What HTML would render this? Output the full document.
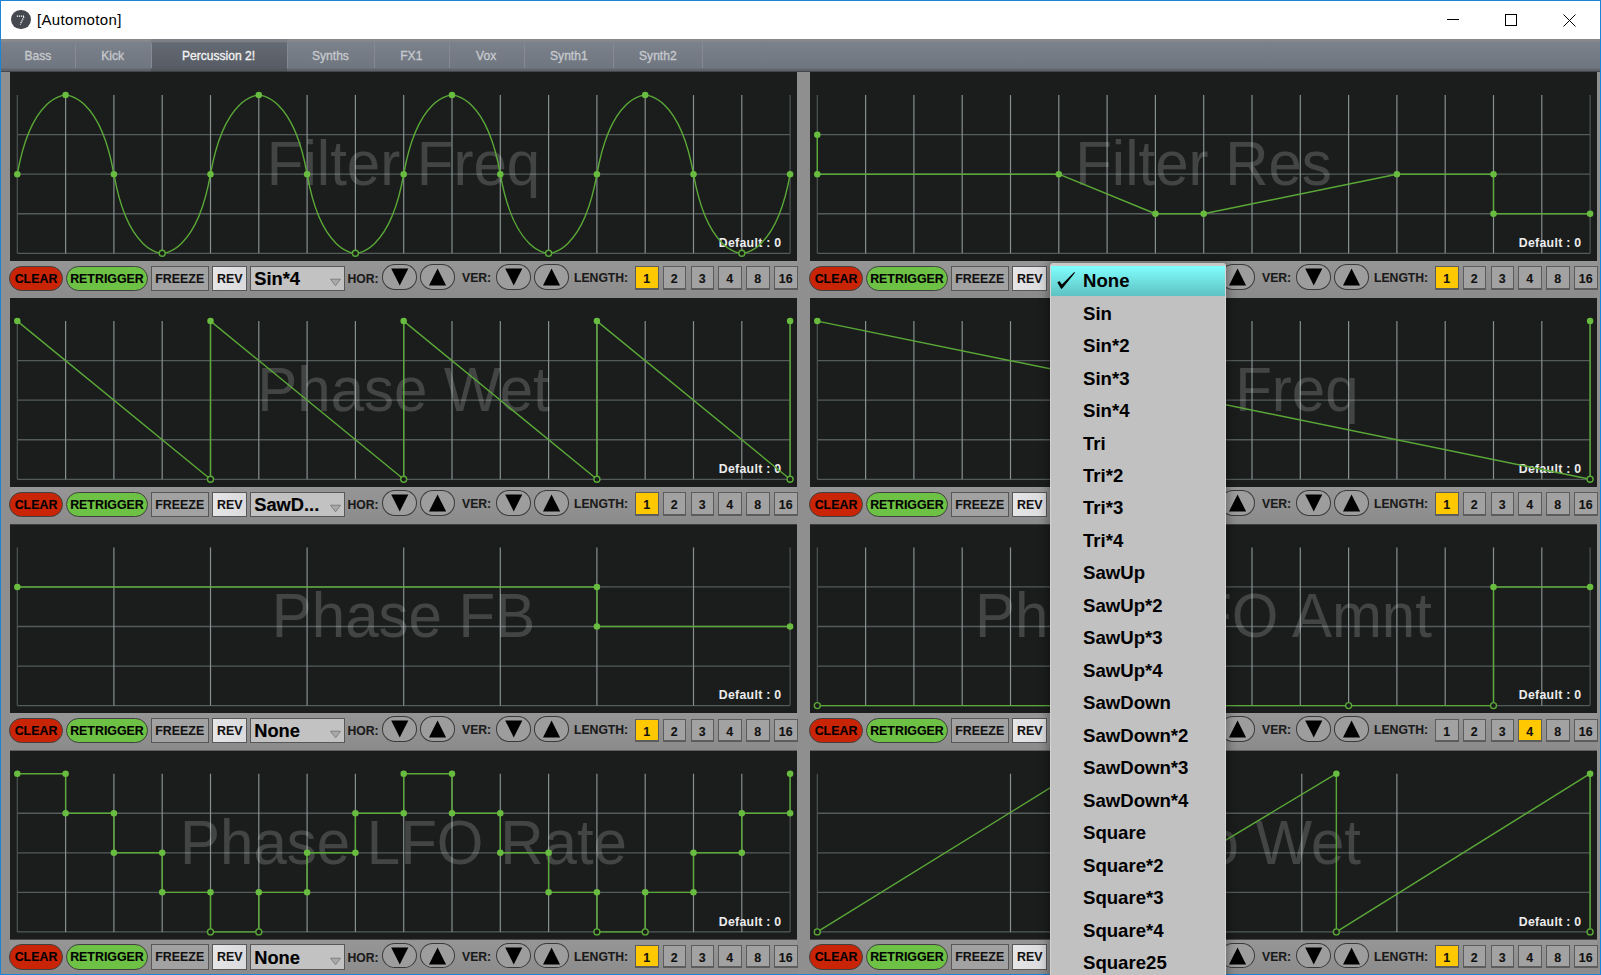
<!DOCTYPE html>
<html><head><meta charset="utf-8"><style>
*{margin:0;padding:0;box-sizing:border-box}
html,body{width:1601px;height:975px;overflow:hidden;background:#1a84d8;font-family:"Liberation Sans",sans-serif}
#win{position:absolute;left:1px;top:1px;width:1599px;height:973px;background:#8f8f8f;overflow:hidden}
#title{position:absolute;left:0;top:0;width:1599px;height:38px;background:#fff}
#icon{position:absolute;left:10px;top:8.5px;width:19.5px;height:19.5px;border-radius:50%;background:#45484e}
#ttl{position:absolute;left:36px;top:10px;font-size:15px;color:#000;letter-spacing:0.35px}
.wc{position:absolute;background:#000}
#tabs{position:absolute;left:0;top:38px;width:1599px;height:33px;background:linear-gradient(#88898c 0px,#86888b 2.5px,#7b818a 3.5px,#6f7680 29px,#60656d 30.5px,#5d6269 32px,#2c2e31 33px)}
.tab{position:absolute;top:0;height:33px;text-align:center;color:#c6c9cd}
.tab span{display:inline-block;font-size:13.4px;line-height:34px;transform:scaleX(0.9);-webkit-text-stroke:0.35px #c6c9cd;white-space:nowrap}
.tab.sel{background:linear-gradient(#7e8185 0px,#7c7f84 2.5px,#646a73 4px,#575c65 29px,#52575e 30.5px,#50555c 32px,#2a2c2f 33px);color:#f2f2f2}
.tab.sel span{-webkit-text-stroke:0.35px #f2f2f2}
.tsep{position:absolute;top:4px;width:1px;height:25px;background:#868b92}
.crow{position:absolute;width:787px;height:37px;background:linear-gradient(#969696,#8b8b8b)}
.pill{position:absolute;height:25.5px;border-radius:13px;border:1.3px solid #404040;font-weight:bold;font-size:12.4px;line-height:25px;text-align:center;color:#000;-webkit-text-stroke:0.1px #000}
.red{background:#ca2407}
.grn{background:#6dc144}
.rb{position:absolute;height:25.5px;border:1.5px solid #575757;font-weight:bold;font-size:12.4px;line-height:24px;text-align:center;color:#111;-webkit-text-stroke:0.1px #111}
.frz{background:#a2a2a2}
.rev{background:linear-gradient(90deg,#e6e6e8,#dadadc)}
.dd{position:absolute;height:25.5px;border:1.5px solid #575757;background:#c2c2c2}
.dd span{position:absolute;left:3px;top:2.5px;font-weight:bold;font-size:18.3px;line-height:20px;color:#000;-webkit-text-stroke:0.15px #000}
.dd svg{position:absolute;left:78px;top:11.5px}
.lbl{position:absolute;height:25px;font-weight:bold;font-size:12.2px;line-height:26px;color:#1a1a1a;-webkit-text-stroke:0.1px #1a1a1a}
.ell{position:absolute;width:34.5px;height:25.5px;border-radius:13px/12.75px;border:1.5px solid #3a3a3a;background:#9d9d9d}
.ell svg{position:absolute;left:-1px;top:-1px}
.lb{position:absolute;width:23.5px;height:23.5px;border:1.6px solid #5c5c5c;border-bottom-width:2px;background:#a2a2a2;font-weight:bold;font-size:12.4px;line-height:24.5px;text-align:center;color:#111;-webkit-text-stroke:0.1px #111}
.lb.on{background:#ffc800}
#menu{position:absolute;left:1050px;top:262.5px;width:176px;height:720px;background:#c1c1c1;border-radius:3px 3px 0 0;box-shadow:0 0 10px 2px rgba(0,0,0,0.35);border-left:1px solid #d6d2d2;border-right:1px solid #d6d6d6;border-top:3.1px solid #c9c9c9}
#hl{position:absolute;left:0;top:0;width:174px;height:30.3px;background:linear-gradient(#80fefe,#5ec2c2)}
.mi{position:absolute;left:32px;height:32px;font-weight:bold;font-size:18.6px;line-height:32px;color:#000;margin-top:-0.4px}
#chk{position:absolute;left:-1px;top:-3.6px}
</style></head><body>
<div id="win">
<div id="title"><div id="icon"><svg width="19.5" height="19.5"><path d="M5.8,6.2 L13.2,6.2 L9.2,14.5" fill="none" stroke="#fff" stroke-width="1.3" stroke-dasharray="1.2 0.8"/></svg></div><div id="ttl">[Automoton]</div>
<div class="wc" style="left:1445.5px;top:18px;width:12px;height:1px"></div>
<div style="position:absolute;left:1503.5px;top:13px;width:12px;height:12px;border:1px solid #000"></div>
<svg style="position:absolute;left:1562px;top:13px" width="13" height="13"><path d="M0.5,0.5 L12.5,12.5 M12.5,0.5 L0.5,12.5" stroke="#000" stroke-width="1"/></svg>
</div>
<div id="tabs">
<div class="tab" style="left:0px;width:74px"><span>Bass</span></div>
<div class="tab" style="left:74px;width:76px"><span>Kick</span></div>
<div class="tab sel" style="left:150px;width:136px"><span>Percussion 2!</span></div>
<div class="tab" style="left:286px;width:87px"><span>Synths</span></div>
<div class="tab" style="left:373px;width:75px"><span>FX1</span></div>
<div class="tab" style="left:448px;width:75px"><span>Vox</span></div>
<div class="tab" style="left:523px;width:89px"><span>Synth1</span></div>
<div class="tab" style="left:612px;width:89px"><span>Synth2</span></div>
<div class="tsep" style="left:74px"></div>
<div class="tsep" style="left:150px"></div>
<div class="tsep" style="left:286px"></div>
<div class="tsep" style="left:373px"></div>
<div class="tsep" style="left:448px"></div>
<div class="tsep" style="left:523px"></div>
<div class="tsep" style="left:612px"></div>
<div class="tsep" style="left:701px"></div>
</div>
</div>
<svg width="1601" height="975" style="position:absolute;left:0;top:0"><rect x="10" y="72" width="787" height="189" fill="#1b1d1c"/>
<line x1="17.3" y1="253.3" x2="790.1" y2="253.3" stroke="#535c5b" stroke-width="1.3"/>
<line x1="17.3" y1="213.75" x2="790.1" y2="213.75" stroke="#535c5b" stroke-width="1.3"/>
<line x1="17.3" y1="174.20000000000002" x2="790.1" y2="174.20000000000002" stroke="#535c5b" stroke-width="1.3"/>
<line x1="17.3" y1="134.65000000000003" x2="790.1" y2="134.65000000000003" stroke="#535c5b" stroke-width="1.3"/>
<line x1="17.30" y1="95.1" x2="17.30" y2="253.3" stroke="#4e5655" stroke-width="1.2"/>
<line x1="65.60" y1="95.1" x2="65.60" y2="253.3" stroke="#85908f" stroke-width="1.2"/>
<line x1="113.90" y1="95.1" x2="113.90" y2="253.3" stroke="#85908f" stroke-width="1.2"/>
<line x1="162.20" y1="95.1" x2="162.20" y2="253.3" stroke="#85908f" stroke-width="1.2"/>
<line x1="210.50" y1="95.1" x2="210.50" y2="253.3" stroke="#85908f" stroke-width="1.2"/>
<line x1="258.80" y1="95.1" x2="258.80" y2="253.3" stroke="#85908f" stroke-width="1.2"/>
<line x1="307.10" y1="95.1" x2="307.10" y2="253.3" stroke="#85908f" stroke-width="1.2"/>
<line x1="355.40" y1="95.1" x2="355.40" y2="253.3" stroke="#85908f" stroke-width="1.2"/>
<line x1="403.70" y1="95.1" x2="403.70" y2="253.3" stroke="#85908f" stroke-width="1.2"/>
<line x1="452.00" y1="95.1" x2="452.00" y2="253.3" stroke="#85908f" stroke-width="1.2"/>
<line x1="500.30" y1="95.1" x2="500.30" y2="253.3" stroke="#85908f" stroke-width="1.2"/>
<line x1="548.60" y1="95.1" x2="548.60" y2="253.3" stroke="#85908f" stroke-width="1.2"/>
<line x1="596.90" y1="95.1" x2="596.90" y2="253.3" stroke="#85908f" stroke-width="1.2"/>
<line x1="645.20" y1="95.1" x2="645.20" y2="253.3" stroke="#85908f" stroke-width="1.2"/>
<line x1="693.50" y1="95.1" x2="693.50" y2="253.3" stroke="#85908f" stroke-width="1.2"/>
<line x1="741.80" y1="95.1" x2="741.80" y2="253.3" stroke="#85908f" stroke-width="1.2"/>
<line x1="790.10" y1="95.1" x2="790.10" y2="253.3" stroke="#4e5655" stroke-width="1.2"/>
<text transform="translate(403.5,184.9) scale(1,1.035)" x="0" y="0" text-anchor="middle" font-family="Liberation Sans" font-size="60" fill="#ffffff" fill-opacity="0.175">Filter Freq</text>
<text x="781.5" y="247" text-anchor="end" font-family="Liberation Sans" font-weight="bold" font-size="12.3" letter-spacing="0.3" fill="#ececec">Default : 0</text>
<path d="M17.30,174.20 C31.31,95.10 64.63,95.10 65.60,95.10 C66.57,95.10 99.89,95.10 113.90,174.20 C127.91,253.30 161.23,253.30 162.20,253.30 C163.17,253.30 196.49,253.30 210.50,174.20 C224.51,95.10 257.83,95.10 258.80,95.10 C259.77,95.10 293.09,95.10 307.10,174.20 C321.11,253.30 354.43,253.30 355.40,253.30 C356.37,253.30 389.69,253.30 403.70,174.20 C417.71,95.10 451.03,95.10 452.00,95.10 C452.97,95.10 486.29,95.10 500.30,174.20 C514.31,253.30 547.63,253.30 548.60,253.30 C549.57,253.30 582.89,253.30 596.90,174.20 C610.91,95.10 644.23,95.10 645.20,95.10 C646.17,95.10 679.49,95.10 693.50,174.20 C707.51,253.30 740.83,253.30 741.80,253.30 C742.77,253.30 776.09,253.30 790.10,174.20" fill="none" stroke="#5aa937" stroke-width="1.4" stroke-linejoin="round"/>
<circle cx="17.30" cy="174.20" r="3.25" fill="#68bc3f"/>
<circle cx="65.60" cy="95.10" r="3.25" fill="#68bc3f"/>
<circle cx="113.90" cy="174.20" r="3.25" fill="#68bc3f"/>
<circle cx="162.20" cy="253.30" r="3.0" fill="#1b1d1c" stroke="#5aa937" stroke-width="1.4"/>
<circle cx="210.50" cy="174.20" r="3.25" fill="#68bc3f"/>
<circle cx="258.80" cy="95.10" r="3.25" fill="#68bc3f"/>
<circle cx="307.10" cy="174.20" r="3.25" fill="#68bc3f"/>
<circle cx="355.40" cy="253.30" r="3.0" fill="#1b1d1c" stroke="#5aa937" stroke-width="1.4"/>
<circle cx="403.70" cy="174.20" r="3.25" fill="#68bc3f"/>
<circle cx="452.00" cy="95.10" r="3.25" fill="#68bc3f"/>
<circle cx="500.30" cy="174.20" r="3.25" fill="#68bc3f"/>
<circle cx="548.60" cy="253.30" r="3.0" fill="#1b1d1c" stroke="#5aa937" stroke-width="1.4"/>
<circle cx="596.90" cy="174.20" r="3.25" fill="#68bc3f"/>
<circle cx="645.20" cy="95.10" r="3.25" fill="#68bc3f"/>
<circle cx="693.50" cy="174.20" r="3.25" fill="#68bc3f"/>
<circle cx="741.80" cy="253.30" r="3.0" fill="#1b1d1c" stroke="#5aa937" stroke-width="1.4"/>
<circle cx="790.10" cy="174.20" r="3.25" fill="#68bc3f"/>
<rect x="810" y="72" width="787" height="189" fill="#1b1d1c"/>
<line x1="817.3" y1="253.3" x2="1590.1" y2="253.3" stroke="#535c5b" stroke-width="1.3"/>
<line x1="817.3" y1="213.75" x2="1590.1" y2="213.75" stroke="#535c5b" stroke-width="1.3"/>
<line x1="817.3" y1="174.20000000000002" x2="1590.1" y2="174.20000000000002" stroke="#535c5b" stroke-width="1.3"/>
<line x1="817.3" y1="134.65000000000003" x2="1590.1" y2="134.65000000000003" stroke="#535c5b" stroke-width="1.3"/>
<line x1="817.30" y1="95.1" x2="817.30" y2="253.3" stroke="#4e5655" stroke-width="1.2"/>
<line x1="865.60" y1="95.1" x2="865.60" y2="253.3" stroke="#85908f" stroke-width="1.2"/>
<line x1="913.90" y1="95.1" x2="913.90" y2="253.3" stroke="#85908f" stroke-width="1.2"/>
<line x1="962.20" y1="95.1" x2="962.20" y2="253.3" stroke="#85908f" stroke-width="1.2"/>
<line x1="1010.50" y1="95.1" x2="1010.50" y2="253.3" stroke="#85908f" stroke-width="1.2"/>
<line x1="1058.80" y1="95.1" x2="1058.80" y2="253.3" stroke="#85908f" stroke-width="1.2"/>
<line x1="1107.10" y1="95.1" x2="1107.10" y2="253.3" stroke="#85908f" stroke-width="1.2"/>
<line x1="1155.40" y1="95.1" x2="1155.40" y2="253.3" stroke="#85908f" stroke-width="1.2"/>
<line x1="1203.70" y1="95.1" x2="1203.70" y2="253.3" stroke="#85908f" stroke-width="1.2"/>
<line x1="1252.00" y1="95.1" x2="1252.00" y2="253.3" stroke="#85908f" stroke-width="1.2"/>
<line x1="1300.30" y1="95.1" x2="1300.30" y2="253.3" stroke="#85908f" stroke-width="1.2"/>
<line x1="1348.60" y1="95.1" x2="1348.60" y2="253.3" stroke="#85908f" stroke-width="1.2"/>
<line x1="1396.90" y1="95.1" x2="1396.90" y2="253.3" stroke="#85908f" stroke-width="1.2"/>
<line x1="1445.20" y1="95.1" x2="1445.20" y2="253.3" stroke="#85908f" stroke-width="1.2"/>
<line x1="1493.50" y1="95.1" x2="1493.50" y2="253.3" stroke="#85908f" stroke-width="1.2"/>
<line x1="1541.80" y1="95.1" x2="1541.80" y2="253.3" stroke="#85908f" stroke-width="1.2"/>
<line x1="1590.10" y1="95.1" x2="1590.10" y2="253.3" stroke="#4e5655" stroke-width="1.2"/>
<text transform="translate(1203.5,184.9) scale(1,1.035)" x="0" y="0" text-anchor="middle" font-family="Liberation Sans" font-size="60" fill="#ffffff" fill-opacity="0.175">Filter Res</text>
<text x="1581.5" y="247" text-anchor="end" font-family="Liberation Sans" font-weight="bold" font-size="12.3" letter-spacing="0.3" fill="#ececec">Default : 0</text>
<path d="M817.30,134.65 L817.30,174.20 L1058.80,174.20 L1155.40,213.75 L1203.70,213.75 L1396.90,174.20 L1493.50,174.20 L1493.50,213.75 L1590.10,213.75" fill="none" stroke="#5aa937" stroke-width="1.4" stroke-linejoin="round"/>
<circle cx="817.30" cy="134.65" r="3.25" fill="#68bc3f"/>
<circle cx="817.30" cy="174.20" r="3.25" fill="#68bc3f"/>
<circle cx="1058.80" cy="174.20" r="3.25" fill="#68bc3f"/>
<circle cx="1155.40" cy="213.75" r="3.25" fill="#68bc3f"/>
<circle cx="1203.70" cy="213.75" r="3.25" fill="#68bc3f"/>
<circle cx="1396.90" cy="174.20" r="3.25" fill="#68bc3f"/>
<circle cx="1493.50" cy="174.20" r="3.25" fill="#68bc3f"/>
<circle cx="1493.50" cy="213.75" r="3.25" fill="#68bc3f"/>
<circle cx="1590.10" cy="213.75" r="3.25" fill="#68bc3f"/>
<rect x="10" y="298" width="787" height="189" fill="#1b1d1c"/>
<line x1="17.3" y1="479.3" x2="790.1" y2="479.3" stroke="#535c5b" stroke-width="1.3"/>
<line x1="17.3" y1="439.75" x2="790.1" y2="439.75" stroke="#535c5b" stroke-width="1.3"/>
<line x1="17.3" y1="400.20000000000005" x2="790.1" y2="400.20000000000005" stroke="#535c5b" stroke-width="1.3"/>
<line x1="17.3" y1="360.65000000000003" x2="790.1" y2="360.65000000000003" stroke="#535c5b" stroke-width="1.3"/>
<line x1="17.30" y1="321.1" x2="17.30" y2="479.3" stroke="#4e5655" stroke-width="1.2"/>
<line x1="65.60" y1="321.1" x2="65.60" y2="479.3" stroke="#85908f" stroke-width="1.2"/>
<line x1="113.90" y1="321.1" x2="113.90" y2="479.3" stroke="#85908f" stroke-width="1.2"/>
<line x1="162.20" y1="321.1" x2="162.20" y2="479.3" stroke="#85908f" stroke-width="1.2"/>
<line x1="210.50" y1="321.1" x2="210.50" y2="479.3" stroke="#85908f" stroke-width="1.2"/>
<line x1="258.80" y1="321.1" x2="258.80" y2="479.3" stroke="#85908f" stroke-width="1.2"/>
<line x1="307.10" y1="321.1" x2="307.10" y2="479.3" stroke="#85908f" stroke-width="1.2"/>
<line x1="355.40" y1="321.1" x2="355.40" y2="479.3" stroke="#85908f" stroke-width="1.2"/>
<line x1="403.70" y1="321.1" x2="403.70" y2="479.3" stroke="#85908f" stroke-width="1.2"/>
<line x1="452.00" y1="321.1" x2="452.00" y2="479.3" stroke="#85908f" stroke-width="1.2"/>
<line x1="500.30" y1="321.1" x2="500.30" y2="479.3" stroke="#85908f" stroke-width="1.2"/>
<line x1="548.60" y1="321.1" x2="548.60" y2="479.3" stroke="#85908f" stroke-width="1.2"/>
<line x1="596.90" y1="321.1" x2="596.90" y2="479.3" stroke="#85908f" stroke-width="1.2"/>
<line x1="645.20" y1="321.1" x2="645.20" y2="479.3" stroke="#85908f" stroke-width="1.2"/>
<line x1="693.50" y1="321.1" x2="693.50" y2="479.3" stroke="#85908f" stroke-width="1.2"/>
<line x1="741.80" y1="321.1" x2="741.80" y2="479.3" stroke="#85908f" stroke-width="1.2"/>
<line x1="790.10" y1="321.1" x2="790.10" y2="479.3" stroke="#4e5655" stroke-width="1.2"/>
<text transform="translate(403.5,410.9) scale(1,1.035)" x="0" y="0" text-anchor="middle" font-family="Liberation Sans" font-size="60" fill="#ffffff" fill-opacity="0.175">Phase Wet</text>
<text x="781.5" y="473" text-anchor="end" font-family="Liberation Sans" font-weight="bold" font-size="12.3" letter-spacing="0.3" fill="#ececec">Default : 0</text>
<path d="M17.30,321.10 L210.50,479.30 L210.50,321.10 L403.70,479.30 L403.70,321.10 L596.90,479.30 L596.90,321.10 L790.10,479.30 L790.10,321.10" fill="none" stroke="#5aa937" stroke-width="1.4" stroke-linejoin="round"/>
<circle cx="17.30" cy="321.10" r="3.25" fill="#68bc3f"/>
<circle cx="210.50" cy="479.30" r="3.0" fill="#1b1d1c" stroke="#5aa937" stroke-width="1.4"/>
<circle cx="210.50" cy="321.10" r="3.25" fill="#68bc3f"/>
<circle cx="403.70" cy="479.30" r="3.0" fill="#1b1d1c" stroke="#5aa937" stroke-width="1.4"/>
<circle cx="403.70" cy="321.10" r="3.25" fill="#68bc3f"/>
<circle cx="596.90" cy="479.30" r="3.0" fill="#1b1d1c" stroke="#5aa937" stroke-width="1.4"/>
<circle cx="596.90" cy="321.10" r="3.25" fill="#68bc3f"/>
<circle cx="790.10" cy="479.30" r="3.0" fill="#1b1d1c" stroke="#5aa937" stroke-width="1.4"/>
<circle cx="790.10" cy="321.10" r="3.25" fill="#68bc3f"/>
<rect x="810" y="298" width="787" height="189" fill="#1b1d1c"/>
<line x1="817.3" y1="479.3" x2="1590.1" y2="479.3" stroke="#535c5b" stroke-width="1.3"/>
<line x1="817.3" y1="439.75" x2="1590.1" y2="439.75" stroke="#535c5b" stroke-width="1.3"/>
<line x1="817.3" y1="400.20000000000005" x2="1590.1" y2="400.20000000000005" stroke="#535c5b" stroke-width="1.3"/>
<line x1="817.3" y1="360.65000000000003" x2="1590.1" y2="360.65000000000003" stroke="#535c5b" stroke-width="1.3"/>
<line x1="817.30" y1="321.1" x2="817.30" y2="479.3" stroke="#4e5655" stroke-width="1.2"/>
<line x1="865.60" y1="321.1" x2="865.60" y2="479.3" stroke="#85908f" stroke-width="1.2"/>
<line x1="913.90" y1="321.1" x2="913.90" y2="479.3" stroke="#85908f" stroke-width="1.2"/>
<line x1="962.20" y1="321.1" x2="962.20" y2="479.3" stroke="#85908f" stroke-width="1.2"/>
<line x1="1010.50" y1="321.1" x2="1010.50" y2="479.3" stroke="#85908f" stroke-width="1.2"/>
<line x1="1058.80" y1="321.1" x2="1058.80" y2="479.3" stroke="#85908f" stroke-width="1.2"/>
<line x1="1107.10" y1="321.1" x2="1107.10" y2="479.3" stroke="#85908f" stroke-width="1.2"/>
<line x1="1155.40" y1="321.1" x2="1155.40" y2="479.3" stroke="#85908f" stroke-width="1.2"/>
<line x1="1203.70" y1="321.1" x2="1203.70" y2="479.3" stroke="#85908f" stroke-width="1.2"/>
<line x1="1252.00" y1="321.1" x2="1252.00" y2="479.3" stroke="#85908f" stroke-width="1.2"/>
<line x1="1300.30" y1="321.1" x2="1300.30" y2="479.3" stroke="#85908f" stroke-width="1.2"/>
<line x1="1348.60" y1="321.1" x2="1348.60" y2="479.3" stroke="#85908f" stroke-width="1.2"/>
<line x1="1396.90" y1="321.1" x2="1396.90" y2="479.3" stroke="#85908f" stroke-width="1.2"/>
<line x1="1445.20" y1="321.1" x2="1445.20" y2="479.3" stroke="#85908f" stroke-width="1.2"/>
<line x1="1493.50" y1="321.1" x2="1493.50" y2="479.3" stroke="#85908f" stroke-width="1.2"/>
<line x1="1541.80" y1="321.1" x2="1541.80" y2="479.3" stroke="#85908f" stroke-width="1.2"/>
<line x1="1590.10" y1="321.1" x2="1590.10" y2="479.3" stroke="#4e5655" stroke-width="1.2"/>
<text transform="translate(1203.5,410.9) scale(1,1.035)" x="0" y="0" text-anchor="middle" font-family="Liberation Sans" font-size="60" fill="#ffffff" fill-opacity="0.175">Phase Freq</text>
<text x="1581.5" y="473" text-anchor="end" font-family="Liberation Sans" font-weight="bold" font-size="12.3" letter-spacing="0.3" fill="#ececec">Default : 0</text>
<path d="M817.30,321.10 L1590.10,479.30 L1590.10,321.10" fill="none" stroke="#5aa937" stroke-width="1.4" stroke-linejoin="round"/>
<circle cx="817.30" cy="321.10" r="3.25" fill="#68bc3f"/>
<circle cx="1590.10" cy="479.30" r="3.0" fill="#1b1d1c" stroke="#5aa937" stroke-width="1.4"/>
<circle cx="1590.10" cy="321.10" r="3.25" fill="#68bc3f"/>
<rect x="10" y="524.3" width="787" height="189" fill="#1b1d1c"/>
<line x1="17.3" y1="705.5999999999999" x2="790.1" y2="705.5999999999999" stroke="#535c5b" stroke-width="1.3"/>
<line x1="17.3" y1="666.05" x2="790.1" y2="666.05" stroke="#535c5b" stroke-width="1.3"/>
<line x1="17.3" y1="626.4999999999999" x2="790.1" y2="626.4999999999999" stroke="#535c5b" stroke-width="1.3"/>
<line x1="17.3" y1="586.9499999999999" x2="790.1" y2="586.9499999999999" stroke="#535c5b" stroke-width="1.3"/>
<line x1="17.30" y1="547.4" x2="17.30" y2="705.5999999999999" stroke="#4e5655" stroke-width="1.2"/>
<line x1="113.90" y1="547.4" x2="113.90" y2="705.5999999999999" stroke="#85908f" stroke-width="1.2"/>
<line x1="210.50" y1="547.4" x2="210.50" y2="705.5999999999999" stroke="#85908f" stroke-width="1.2"/>
<line x1="307.10" y1="547.4" x2="307.10" y2="705.5999999999999" stroke="#85908f" stroke-width="1.2"/>
<line x1="403.70" y1="547.4" x2="403.70" y2="705.5999999999999" stroke="#85908f" stroke-width="1.2"/>
<line x1="500.30" y1="547.4" x2="500.30" y2="705.5999999999999" stroke="#85908f" stroke-width="1.2"/>
<line x1="596.90" y1="547.4" x2="596.90" y2="705.5999999999999" stroke="#85908f" stroke-width="1.2"/>
<line x1="693.50" y1="547.4" x2="693.50" y2="705.5999999999999" stroke="#85908f" stroke-width="1.2"/>
<line x1="790.10" y1="547.4" x2="790.10" y2="705.5999999999999" stroke="#4e5655" stroke-width="1.2"/>
<text transform="translate(403.5,637.1999999999999) scale(1,1.035)" x="0" y="0" text-anchor="middle" font-family="Liberation Sans" font-size="60" fill="#ffffff" fill-opacity="0.175">Phase FB</text>
<text x="781.5" y="699.3" text-anchor="end" font-family="Liberation Sans" font-weight="bold" font-size="12.3" letter-spacing="0.3" fill="#ececec">Default : 0</text>
<path d="M17.30,586.95 L596.90,586.95 L596.90,626.50 L790.10,626.50" fill="none" stroke="#5aa937" stroke-width="1.4" stroke-linejoin="round"/>
<circle cx="17.30" cy="586.95" r="3.25" fill="#68bc3f"/>
<circle cx="596.90" cy="586.95" r="3.25" fill="#68bc3f"/>
<circle cx="596.90" cy="626.50" r="3.25" fill="#68bc3f"/>
<circle cx="790.10" cy="626.50" r="3.25" fill="#68bc3f"/>
<rect x="810" y="524.3" width="787" height="189" fill="#1b1d1c"/>
<line x1="817.3" y1="705.5999999999999" x2="1590.1" y2="705.5999999999999" stroke="#535c5b" stroke-width="1.3"/>
<line x1="817.3" y1="666.05" x2="1590.1" y2="666.05" stroke="#535c5b" stroke-width="1.3"/>
<line x1="817.3" y1="626.4999999999999" x2="1590.1" y2="626.4999999999999" stroke="#535c5b" stroke-width="1.3"/>
<line x1="817.3" y1="586.9499999999999" x2="1590.1" y2="586.9499999999999" stroke="#535c5b" stroke-width="1.3"/>
<line x1="817.30" y1="547.4" x2="817.30" y2="705.5999999999999" stroke="#4e5655" stroke-width="1.2"/>
<line x1="865.60" y1="547.4" x2="865.60" y2="705.5999999999999" stroke="#85908f" stroke-width="1.2"/>
<line x1="913.90" y1="547.4" x2="913.90" y2="705.5999999999999" stroke="#85908f" stroke-width="1.2"/>
<line x1="962.20" y1="547.4" x2="962.20" y2="705.5999999999999" stroke="#85908f" stroke-width="1.2"/>
<line x1="1010.50" y1="547.4" x2="1010.50" y2="705.5999999999999" stroke="#85908f" stroke-width="1.2"/>
<line x1="1058.80" y1="547.4" x2="1058.80" y2="705.5999999999999" stroke="#85908f" stroke-width="1.2"/>
<line x1="1107.10" y1="547.4" x2="1107.10" y2="705.5999999999999" stroke="#85908f" stroke-width="1.2"/>
<line x1="1155.40" y1="547.4" x2="1155.40" y2="705.5999999999999" stroke="#85908f" stroke-width="1.2"/>
<line x1="1203.70" y1="547.4" x2="1203.70" y2="705.5999999999999" stroke="#85908f" stroke-width="1.2"/>
<line x1="1252.00" y1="547.4" x2="1252.00" y2="705.5999999999999" stroke="#85908f" stroke-width="1.2"/>
<line x1="1300.30" y1="547.4" x2="1300.30" y2="705.5999999999999" stroke="#85908f" stroke-width="1.2"/>
<line x1="1348.60" y1="547.4" x2="1348.60" y2="705.5999999999999" stroke="#85908f" stroke-width="1.2"/>
<line x1="1396.90" y1="547.4" x2="1396.90" y2="705.5999999999999" stroke="#85908f" stroke-width="1.2"/>
<line x1="1445.20" y1="547.4" x2="1445.20" y2="705.5999999999999" stroke="#85908f" stroke-width="1.2"/>
<line x1="1493.50" y1="547.4" x2="1493.50" y2="705.5999999999999" stroke="#85908f" stroke-width="1.2"/>
<line x1="1541.80" y1="547.4" x2="1541.80" y2="705.5999999999999" stroke="#85908f" stroke-width="1.2"/>
<line x1="1590.10" y1="547.4" x2="1590.10" y2="705.5999999999999" stroke="#4e5655" stroke-width="1.2"/>
<text transform="translate(1203.5,637.1999999999999) scale(1,1.035)" x="0" y="0" text-anchor="middle" font-family="Liberation Sans" font-size="60" fill="#ffffff" fill-opacity="0.175">Phase LFO Amnt</text>
<text x="1581.5" y="699.3" text-anchor="end" font-family="Liberation Sans" font-weight="bold" font-size="12.3" letter-spacing="0.3" fill="#ececec">Default : 0</text>
<path d="M817.30,705.60 L1348.60,705.60 L1493.50,705.60 L1493.50,586.95 L1590.10,586.95" fill="none" stroke="#5aa937" stroke-width="1.4" stroke-linejoin="round"/>
<circle cx="817.30" cy="705.60" r="3.0" fill="#1b1d1c" stroke="#5aa937" stroke-width="1.4"/>
<circle cx="1348.60" cy="705.60" r="3.0" fill="#1b1d1c" stroke="#5aa937" stroke-width="1.4"/>
<circle cx="1493.50" cy="705.60" r="3.0" fill="#1b1d1c" stroke="#5aa937" stroke-width="1.4"/>
<circle cx="1493.50" cy="586.95" r="3.25" fill="#68bc3f"/>
<circle cx="1590.10" cy="586.95" r="3.25" fill="#68bc3f"/>
<rect x="10" y="750.6" width="787" height="189" fill="#1b1d1c"/>
<line x1="17.3" y1="931.9000000000001" x2="790.1" y2="931.9000000000001" stroke="#535c5b" stroke-width="1.3"/>
<line x1="17.3" y1="892.3500000000001" x2="790.1" y2="892.3500000000001" stroke="#535c5b" stroke-width="1.3"/>
<line x1="17.3" y1="852.8000000000001" x2="790.1" y2="852.8000000000001" stroke="#535c5b" stroke-width="1.3"/>
<line x1="17.3" y1="813.2500000000001" x2="790.1" y2="813.2500000000001" stroke="#535c5b" stroke-width="1.3"/>
<line x1="17.30" y1="773.7" x2="17.30" y2="931.9000000000001" stroke="#4e5655" stroke-width="1.2"/>
<line x1="65.60" y1="773.7" x2="65.60" y2="931.9000000000001" stroke="#85908f" stroke-width="1.2"/>
<line x1="113.90" y1="773.7" x2="113.90" y2="931.9000000000001" stroke="#85908f" stroke-width="1.2"/>
<line x1="162.20" y1="773.7" x2="162.20" y2="931.9000000000001" stroke="#85908f" stroke-width="1.2"/>
<line x1="210.50" y1="773.7" x2="210.50" y2="931.9000000000001" stroke="#85908f" stroke-width="1.2"/>
<line x1="258.80" y1="773.7" x2="258.80" y2="931.9000000000001" stroke="#85908f" stroke-width="1.2"/>
<line x1="307.10" y1="773.7" x2="307.10" y2="931.9000000000001" stroke="#85908f" stroke-width="1.2"/>
<line x1="355.40" y1="773.7" x2="355.40" y2="931.9000000000001" stroke="#85908f" stroke-width="1.2"/>
<line x1="403.70" y1="773.7" x2="403.70" y2="931.9000000000001" stroke="#85908f" stroke-width="1.2"/>
<line x1="452.00" y1="773.7" x2="452.00" y2="931.9000000000001" stroke="#85908f" stroke-width="1.2"/>
<line x1="500.30" y1="773.7" x2="500.30" y2="931.9000000000001" stroke="#85908f" stroke-width="1.2"/>
<line x1="548.60" y1="773.7" x2="548.60" y2="931.9000000000001" stroke="#85908f" stroke-width="1.2"/>
<line x1="596.90" y1="773.7" x2="596.90" y2="931.9000000000001" stroke="#85908f" stroke-width="1.2"/>
<line x1="645.20" y1="773.7" x2="645.20" y2="931.9000000000001" stroke="#85908f" stroke-width="1.2"/>
<line x1="693.50" y1="773.7" x2="693.50" y2="931.9000000000001" stroke="#85908f" stroke-width="1.2"/>
<line x1="741.80" y1="773.7" x2="741.80" y2="931.9000000000001" stroke="#85908f" stroke-width="1.2"/>
<line x1="790.10" y1="773.7" x2="790.10" y2="931.9000000000001" stroke="#4e5655" stroke-width="1.2"/>
<text transform="translate(403.5,863.5) scale(1,1.035)" x="0" y="0" text-anchor="middle" font-family="Liberation Sans" font-size="60" fill="#ffffff" fill-opacity="0.175">Phase LFO Rate</text>
<text x="781.5" y="925.6" text-anchor="end" font-family="Liberation Sans" font-weight="bold" font-size="12.3" letter-spacing="0.3" fill="#ececec">Default : 0</text>
<path d="M17.30,773.70 L65.60,773.70 L65.60,813.25 L113.90,813.25 L113.90,852.80 L162.20,852.80 L162.20,892.35 L210.50,892.35 L210.50,931.90 L258.80,931.90 L258.80,892.35 L307.10,892.35 L307.10,852.80 L355.40,852.80 L355.40,813.25 L403.70,813.25 L403.70,773.70 L452.00,773.70 L452.00,813.25 L500.30,813.25 L500.30,852.80 L548.60,852.80 L548.60,892.35 L596.90,892.35 L596.90,931.90 L645.20,931.90 L645.20,892.35 L693.50,892.35 L693.50,852.80 L741.80,852.80 L741.80,813.25 L790.10,813.25 L790.10,773.70" fill="none" stroke="#5aa937" stroke-width="1.4" stroke-linejoin="round"/>
<circle cx="17.30" cy="773.70" r="3.25" fill="#68bc3f"/>
<circle cx="65.60" cy="773.70" r="3.25" fill="#68bc3f"/>
<circle cx="65.60" cy="813.25" r="3.25" fill="#68bc3f"/>
<circle cx="113.90" cy="813.25" r="3.25" fill="#68bc3f"/>
<circle cx="113.90" cy="852.80" r="3.25" fill="#68bc3f"/>
<circle cx="162.20" cy="852.80" r="3.25" fill="#68bc3f"/>
<circle cx="162.20" cy="892.35" r="3.25" fill="#68bc3f"/>
<circle cx="210.50" cy="892.35" r="3.25" fill="#68bc3f"/>
<circle cx="210.50" cy="931.90" r="3.0" fill="#1b1d1c" stroke="#5aa937" stroke-width="1.4"/>
<circle cx="258.80" cy="931.90" r="3.0" fill="#1b1d1c" stroke="#5aa937" stroke-width="1.4"/>
<circle cx="258.80" cy="892.35" r="3.25" fill="#68bc3f"/>
<circle cx="307.10" cy="892.35" r="3.25" fill="#68bc3f"/>
<circle cx="307.10" cy="852.80" r="3.25" fill="#68bc3f"/>
<circle cx="355.40" cy="852.80" r="3.25" fill="#68bc3f"/>
<circle cx="355.40" cy="813.25" r="3.25" fill="#68bc3f"/>
<circle cx="403.70" cy="813.25" r="3.25" fill="#68bc3f"/>
<circle cx="403.70" cy="773.70" r="3.25" fill="#68bc3f"/>
<circle cx="452.00" cy="773.70" r="3.25" fill="#68bc3f"/>
<circle cx="452.00" cy="813.25" r="3.25" fill="#68bc3f"/>
<circle cx="500.30" cy="813.25" r="3.25" fill="#68bc3f"/>
<circle cx="500.30" cy="852.80" r="3.25" fill="#68bc3f"/>
<circle cx="548.60" cy="852.80" r="3.25" fill="#68bc3f"/>
<circle cx="548.60" cy="892.35" r="3.25" fill="#68bc3f"/>
<circle cx="596.90" cy="892.35" r="3.25" fill="#68bc3f"/>
<circle cx="596.90" cy="931.90" r="3.0" fill="#1b1d1c" stroke="#5aa937" stroke-width="1.4"/>
<circle cx="645.20" cy="931.90" r="3.0" fill="#1b1d1c" stroke="#5aa937" stroke-width="1.4"/>
<circle cx="645.20" cy="892.35" r="3.25" fill="#68bc3f"/>
<circle cx="693.50" cy="892.35" r="3.25" fill="#68bc3f"/>
<circle cx="693.50" cy="852.80" r="3.25" fill="#68bc3f"/>
<circle cx="741.80" cy="852.80" r="3.25" fill="#68bc3f"/>
<circle cx="741.80" cy="813.25" r="3.25" fill="#68bc3f"/>
<circle cx="790.10" cy="813.25" r="3.25" fill="#68bc3f"/>
<circle cx="790.10" cy="773.70" r="3.25" fill="#68bc3f"/>
<rect x="810" y="750.6" width="787" height="189" fill="#1b1d1c"/>
<line x1="817.3" y1="931.9000000000001" x2="1590.1" y2="931.9000000000001" stroke="#535c5b" stroke-width="1.3"/>
<line x1="817.3" y1="892.3500000000001" x2="1590.1" y2="892.3500000000001" stroke="#535c5b" stroke-width="1.3"/>
<line x1="817.3" y1="852.8000000000001" x2="1590.1" y2="852.8000000000001" stroke="#535c5b" stroke-width="1.3"/>
<line x1="817.3" y1="813.2500000000001" x2="1590.1" y2="813.2500000000001" stroke="#535c5b" stroke-width="1.3"/>
<line x1="817.30" y1="773.7" x2="817.30" y2="931.9000000000001" stroke="#4e5655" stroke-width="1.2"/>
<line x1="1010.50" y1="773.7" x2="1010.50" y2="931.9000000000001" stroke="#85908f" stroke-width="1.2"/>
<line x1="1301.80" y1="773.7" x2="1301.80" y2="931.9000000000001" stroke="#85908f" stroke-width="1.2"/>
<line x1="1396.90" y1="773.7" x2="1396.90" y2="931.9000000000001" stroke="#85908f" stroke-width="1.2"/>
<line x1="1590.10" y1="773.7" x2="1590.10" y2="931.9000000000001" stroke="#4e5655" stroke-width="1.2"/>
<text transform="translate(1361,863.5) scale(1,1.035)" x="0" y="0" text-anchor="end" font-family="Liberation Sans" font-size="60" fill="#ffffff" fill-opacity="0.175">Stereo Wet</text>
<text x="1581.5" y="925.6" text-anchor="end" font-family="Liberation Sans" font-weight="bold" font-size="12.3" letter-spacing="0.3" fill="#ececec">Default : 0</text>
<path d="M817.30,931.90 L1073.00,773.70 L1073.00,931.90 L1336.35,773.70 L1336.35,931.90 L1590.10,773.70 L1590.10,931.90" fill="none" stroke="#5aa937" stroke-width="1.4" stroke-linejoin="round"/>
<circle cx="817.30" cy="931.90" r="3.0" fill="#1b1d1c" stroke="#5aa937" stroke-width="1.4"/>
<circle cx="1073.00" cy="773.70" r="3.25" fill="#68bc3f"/>
<circle cx="1073.00" cy="931.90" r="3.0" fill="#1b1d1c" stroke="#5aa937" stroke-width="1.4"/>
<circle cx="1336.35" cy="773.70" r="3.25" fill="#68bc3f"/>
<circle cx="1336.35" cy="931.90" r="3.0" fill="#1b1d1c" stroke="#5aa937" stroke-width="1.4"/>
<circle cx="1590.10" cy="773.70" r="3.25" fill="#68bc3f"/>
<circle cx="1590.10" cy="931.90" r="3.0" fill="#1b1d1c" stroke="#5aa937" stroke-width="1.4"/></svg>
<div id="ctrl" style="position:absolute;left:0;top:0">
<div class="crow" style="left:10px;top:261px"></div>
<div class="pill red" style="left:9.25px;top:265.5px;width:53.5px">CLEAR</div>
<div class="pill grn" style="left:66.25px;top:265.5px;width:81.5px">RETRIGGER</div>
<div class="rb frz" style="left:151px;top:265.5px;width:57.5px">FREEZE</div>
<div class="rb rev" style="left:212.25px;top:265.5px;width:35px">REV</div>
<div class="dd" style="left:250.25px;top:265.5px;width:94.75px"><span>Sin*4</span><svg width="14" height="10"><path d="M1.5,1.2 L11.5,1.2 L6.5,7.8 Z" fill="#a9a9a9" stroke="#7c7c7c" stroke-width="0.9" stroke-linejoin="round"/></svg></div>
<div class="lbl" style="left:347.5px;top:266px">HOR:</div>
<div class="ell" style="left:382px;top:264px"><svg width="34" height="25"><path d="M9.2,4.5 L26.3,4.5 L17.75,21.4Z" fill="#000"/></svg></div>
<div class="ell" style="left:420px;top:264px"><svg width="34" height="25"><path d="M9,21.4 L26.1,21.4 L17.55,4.5Z" fill="#000"/></svg></div>
<div class="lbl" style="left:462px;top:265px">VER:</div>
<div class="ell" style="left:496px;top:264px"><svg width="34" height="25"><path d="M9.2,4.5 L26.3,4.5 L17.75,21.4Z" fill="#000"/></svg></div>
<div class="ell" style="left:534px;top:264px"><svg width="34" height="25"><path d="M9,21.4 L26.1,21.4 L17.55,4.5Z" fill="#000"/></svg></div>
<div class="lbl" style="left:574px;top:265px">LENGTH:</div>
<div class="lb on" style="left:635px;top:266.25px">1</div>
<div class="lb" style="left:662.5px;top:266.25px">2</div>
<div class="lb" style="left:690.5px;top:266.25px">3</div>
<div class="lb" style="left:718px;top:266.25px">4</div>
<div class="lb" style="left:746px;top:266.25px">8</div>
<div class="lb" style="left:774px;top:266.25px">16</div>
<div class="crow" style="left:810px;top:261px"></div>
<div class="pill red" style="left:809.25px;top:265.5px;width:53.5px">CLEAR</div>
<div class="pill grn" style="left:866.25px;top:265.5px;width:81.5px">RETRIGGER</div>
<div class="rb frz" style="left:951px;top:265.5px;width:57.5px">FREEZE</div>
<div class="rb rev" style="left:1012.25px;top:265.5px;width:35px">REV</div>
<div class="dd" style="left:1050.25px;top:265.5px;width:94.75px"><span>None</span><svg width="14" height="10"><path d="M1.5,1.2 L11.5,1.2 L6.5,7.8 Z" fill="#a9a9a9" stroke="#7c7c7c" stroke-width="0.9" stroke-linejoin="round"/></svg></div>
<div class="lbl" style="left:1147.5px;top:266px">HOR:</div>
<div class="ell" style="left:1182px;top:264px"><svg width="34" height="25"><path d="M9.2,4.5 L26.3,4.5 L17.75,21.4Z" fill="#000"/></svg></div>
<div class="ell" style="left:1220px;top:264px"><svg width="34" height="25"><path d="M9,21.4 L26.1,21.4 L17.55,4.5Z" fill="#000"/></svg></div>
<div class="lbl" style="left:1262px;top:265px">VER:</div>
<div class="ell" style="left:1296px;top:264px"><svg width="34" height="25"><path d="M9.2,4.5 L26.3,4.5 L17.75,21.4Z" fill="#000"/></svg></div>
<div class="ell" style="left:1334px;top:264px"><svg width="34" height="25"><path d="M9,21.4 L26.1,21.4 L17.55,4.5Z" fill="#000"/></svg></div>
<div class="lbl" style="left:1374px;top:265px">LENGTH:</div>
<div class="lb on" style="left:1435px;top:266.25px">1</div>
<div class="lb" style="left:1462.5px;top:266.25px">2</div>
<div class="lb" style="left:1490.5px;top:266.25px">3</div>
<div class="lb" style="left:1518px;top:266.25px">4</div>
<div class="lb" style="left:1546px;top:266.25px">8</div>
<div class="lb" style="left:1574px;top:266.25px">16</div>
<div class="crow" style="left:10px;top:487px"></div>
<div class="pill red" style="left:9.25px;top:491.5px;width:53.5px">CLEAR</div>
<div class="pill grn" style="left:66.25px;top:491.5px;width:81.5px">RETRIGGER</div>
<div class="rb frz" style="left:151px;top:491.5px;width:57.5px">FREEZE</div>
<div class="rb rev" style="left:212.25px;top:491.5px;width:35px">REV</div>
<div class="dd" style="left:250.25px;top:491.5px;width:94.75px"><span>SawD...</span><svg width="14" height="10"><path d="M1.5,1.2 L11.5,1.2 L6.5,7.8 Z" fill="#a9a9a9" stroke="#7c7c7c" stroke-width="0.9" stroke-linejoin="round"/></svg></div>
<div class="lbl" style="left:347.5px;top:492px">HOR:</div>
<div class="ell" style="left:382px;top:490px"><svg width="34" height="25"><path d="M9.2,4.5 L26.3,4.5 L17.75,21.4Z" fill="#000"/></svg></div>
<div class="ell" style="left:420px;top:490px"><svg width="34" height="25"><path d="M9,21.4 L26.1,21.4 L17.55,4.5Z" fill="#000"/></svg></div>
<div class="lbl" style="left:462px;top:491px">VER:</div>
<div class="ell" style="left:496px;top:490px"><svg width="34" height="25"><path d="M9.2,4.5 L26.3,4.5 L17.75,21.4Z" fill="#000"/></svg></div>
<div class="ell" style="left:534px;top:490px"><svg width="34" height="25"><path d="M9,21.4 L26.1,21.4 L17.55,4.5Z" fill="#000"/></svg></div>
<div class="lbl" style="left:574px;top:491px">LENGTH:</div>
<div class="lb on" style="left:635px;top:492.25px">1</div>
<div class="lb" style="left:662.5px;top:492.25px">2</div>
<div class="lb" style="left:690.5px;top:492.25px">3</div>
<div class="lb" style="left:718px;top:492.25px">4</div>
<div class="lb" style="left:746px;top:492.25px">8</div>
<div class="lb" style="left:774px;top:492.25px">16</div>
<div class="crow" style="left:810px;top:487px"></div>
<div class="pill red" style="left:809.25px;top:491.5px;width:53.5px">CLEAR</div>
<div class="pill grn" style="left:866.25px;top:491.5px;width:81.5px">RETRIGGER</div>
<div class="rb frz" style="left:951px;top:491.5px;width:57.5px">FREEZE</div>
<div class="rb rev" style="left:1012.25px;top:491.5px;width:35px">REV</div>
<div class="dd" style="left:1050.25px;top:491.5px;width:94.75px"><span>None</span><svg width="14" height="10"><path d="M1.5,1.2 L11.5,1.2 L6.5,7.8 Z" fill="#a9a9a9" stroke="#7c7c7c" stroke-width="0.9" stroke-linejoin="round"/></svg></div>
<div class="lbl" style="left:1147.5px;top:492px">HOR:</div>
<div class="ell" style="left:1182px;top:490px"><svg width="34" height="25"><path d="M9.2,4.5 L26.3,4.5 L17.75,21.4Z" fill="#000"/></svg></div>
<div class="ell" style="left:1220px;top:490px"><svg width="34" height="25"><path d="M9,21.4 L26.1,21.4 L17.55,4.5Z" fill="#000"/></svg></div>
<div class="lbl" style="left:1262px;top:491px">VER:</div>
<div class="ell" style="left:1296px;top:490px"><svg width="34" height="25"><path d="M9.2,4.5 L26.3,4.5 L17.75,21.4Z" fill="#000"/></svg></div>
<div class="ell" style="left:1334px;top:490px"><svg width="34" height="25"><path d="M9,21.4 L26.1,21.4 L17.55,4.5Z" fill="#000"/></svg></div>
<div class="lbl" style="left:1374px;top:491px">LENGTH:</div>
<div class="lb on" style="left:1435px;top:492.25px">1</div>
<div class="lb" style="left:1462.5px;top:492.25px">2</div>
<div class="lb" style="left:1490.5px;top:492.25px">3</div>
<div class="lb" style="left:1518px;top:492.25px">4</div>
<div class="lb" style="left:1546px;top:492.25px">8</div>
<div class="lb" style="left:1574px;top:492.25px">16</div>
<div class="crow" style="left:10px;top:713.3px"></div>
<div class="pill red" style="left:9.25px;top:717.8px;width:53.5px">CLEAR</div>
<div class="pill grn" style="left:66.25px;top:717.8px;width:81.5px">RETRIGGER</div>
<div class="rb frz" style="left:151px;top:717.8px;width:57.5px">FREEZE</div>
<div class="rb rev" style="left:212.25px;top:717.8px;width:35px">REV</div>
<div class="dd" style="left:250.25px;top:717.8px;width:94.75px"><span>None</span><svg width="14" height="10"><path d="M1.5,1.2 L11.5,1.2 L6.5,7.8 Z" fill="#a9a9a9" stroke="#7c7c7c" stroke-width="0.9" stroke-linejoin="round"/></svg></div>
<div class="lbl" style="left:347.5px;top:718.3px">HOR:</div>
<div class="ell" style="left:382px;top:716.3px"><svg width="34" height="25"><path d="M9.2,4.5 L26.3,4.5 L17.75,21.4Z" fill="#000"/></svg></div>
<div class="ell" style="left:420px;top:716.3px"><svg width="34" height="25"><path d="M9,21.4 L26.1,21.4 L17.55,4.5Z" fill="#000"/></svg></div>
<div class="lbl" style="left:462px;top:717.3px">VER:</div>
<div class="ell" style="left:496px;top:716.3px"><svg width="34" height="25"><path d="M9.2,4.5 L26.3,4.5 L17.75,21.4Z" fill="#000"/></svg></div>
<div class="ell" style="left:534px;top:716.3px"><svg width="34" height="25"><path d="M9,21.4 L26.1,21.4 L17.55,4.5Z" fill="#000"/></svg></div>
<div class="lbl" style="left:574px;top:717.3px">LENGTH:</div>
<div class="lb on" style="left:635px;top:718.55px">1</div>
<div class="lb" style="left:662.5px;top:718.55px">2</div>
<div class="lb" style="left:690.5px;top:718.55px">3</div>
<div class="lb" style="left:718px;top:718.55px">4</div>
<div class="lb" style="left:746px;top:718.55px">8</div>
<div class="lb" style="left:774px;top:718.55px">16</div>
<div class="crow" style="left:810px;top:713.3px"></div>
<div class="pill red" style="left:809.25px;top:717.8px;width:53.5px">CLEAR</div>
<div class="pill grn" style="left:866.25px;top:717.8px;width:81.5px">RETRIGGER</div>
<div class="rb frz" style="left:951px;top:717.8px;width:57.5px">FREEZE</div>
<div class="rb rev" style="left:1012.25px;top:717.8px;width:35px">REV</div>
<div class="dd" style="left:1050.25px;top:717.8px;width:94.75px"><span>None</span><svg width="14" height="10"><path d="M1.5,1.2 L11.5,1.2 L6.5,7.8 Z" fill="#a9a9a9" stroke="#7c7c7c" stroke-width="0.9" stroke-linejoin="round"/></svg></div>
<div class="lbl" style="left:1147.5px;top:718.3px">HOR:</div>
<div class="ell" style="left:1182px;top:716.3px"><svg width="34" height="25"><path d="M9.2,4.5 L26.3,4.5 L17.75,21.4Z" fill="#000"/></svg></div>
<div class="ell" style="left:1220px;top:716.3px"><svg width="34" height="25"><path d="M9,21.4 L26.1,21.4 L17.55,4.5Z" fill="#000"/></svg></div>
<div class="lbl" style="left:1262px;top:717.3px">VER:</div>
<div class="ell" style="left:1296px;top:716.3px"><svg width="34" height="25"><path d="M9.2,4.5 L26.3,4.5 L17.75,21.4Z" fill="#000"/></svg></div>
<div class="ell" style="left:1334px;top:716.3px"><svg width="34" height="25"><path d="M9,21.4 L26.1,21.4 L17.55,4.5Z" fill="#000"/></svg></div>
<div class="lbl" style="left:1374px;top:717.3px">LENGTH:</div>
<div class="lb" style="left:1435px;top:718.55px">1</div>
<div class="lb" style="left:1462.5px;top:718.55px">2</div>
<div class="lb" style="left:1490.5px;top:718.55px">3</div>
<div class="lb on" style="left:1518px;top:718.55px">4</div>
<div class="lb" style="left:1546px;top:718.55px">8</div>
<div class="lb" style="left:1574px;top:718.55px">16</div>
<div class="crow" style="left:10px;top:939.6px"></div>
<div class="pill red" style="left:9.25px;top:944.1px;width:53.5px">CLEAR</div>
<div class="pill grn" style="left:66.25px;top:944.1px;width:81.5px">RETRIGGER</div>
<div class="rb frz" style="left:151px;top:944.1px;width:57.5px">FREEZE</div>
<div class="rb rev" style="left:212.25px;top:944.1px;width:35px">REV</div>
<div class="dd" style="left:250.25px;top:944.1px;width:94.75px"><span>None</span><svg width="14" height="10"><path d="M1.5,1.2 L11.5,1.2 L6.5,7.8 Z" fill="#a9a9a9" stroke="#7c7c7c" stroke-width="0.9" stroke-linejoin="round"/></svg></div>
<div class="lbl" style="left:347.5px;top:944.6px">HOR:</div>
<div class="ell" style="left:382px;top:942.6px"><svg width="34" height="25"><path d="M9.2,4.5 L26.3,4.5 L17.75,21.4Z" fill="#000"/></svg></div>
<div class="ell" style="left:420px;top:942.6px"><svg width="34" height="25"><path d="M9,21.4 L26.1,21.4 L17.55,4.5Z" fill="#000"/></svg></div>
<div class="lbl" style="left:462px;top:943.6px">VER:</div>
<div class="ell" style="left:496px;top:942.6px"><svg width="34" height="25"><path d="M9.2,4.5 L26.3,4.5 L17.75,21.4Z" fill="#000"/></svg></div>
<div class="ell" style="left:534px;top:942.6px"><svg width="34" height="25"><path d="M9,21.4 L26.1,21.4 L17.55,4.5Z" fill="#000"/></svg></div>
<div class="lbl" style="left:574px;top:943.6px">LENGTH:</div>
<div class="lb on" style="left:635px;top:944.85px">1</div>
<div class="lb" style="left:662.5px;top:944.85px">2</div>
<div class="lb" style="left:690.5px;top:944.85px">3</div>
<div class="lb" style="left:718px;top:944.85px">4</div>
<div class="lb" style="left:746px;top:944.85px">8</div>
<div class="lb" style="left:774px;top:944.85px">16</div>
<div class="crow" style="left:810px;top:939.6px"></div>
<div class="pill red" style="left:809.25px;top:944.1px;width:53.5px">CLEAR</div>
<div class="pill grn" style="left:866.25px;top:944.1px;width:81.5px">RETRIGGER</div>
<div class="rb frz" style="left:951px;top:944.1px;width:57.5px">FREEZE</div>
<div class="rb rev" style="left:1012.25px;top:944.1px;width:35px">REV</div>
<div class="dd" style="left:1050.25px;top:944.1px;width:94.75px"><span>None</span><svg width="14" height="10"><path d="M1.5,1.2 L11.5,1.2 L6.5,7.8 Z" fill="#a9a9a9" stroke="#7c7c7c" stroke-width="0.9" stroke-linejoin="round"/></svg></div>
<div class="lbl" style="left:1147.5px;top:944.6px">HOR:</div>
<div class="ell" style="left:1182px;top:942.6px"><svg width="34" height="25"><path d="M9.2,4.5 L26.3,4.5 L17.75,21.4Z" fill="#000"/></svg></div>
<div class="ell" style="left:1220px;top:942.6px"><svg width="34" height="25"><path d="M9,21.4 L26.1,21.4 L17.55,4.5Z" fill="#000"/></svg></div>
<div class="lbl" style="left:1262px;top:943.6px">VER:</div>
<div class="ell" style="left:1296px;top:942.6px"><svg width="34" height="25"><path d="M9.2,4.5 L26.3,4.5 L17.75,21.4Z" fill="#000"/></svg></div>
<div class="ell" style="left:1334px;top:942.6px"><svg width="34" height="25"><path d="M9,21.4 L26.1,21.4 L17.55,4.5Z" fill="#000"/></svg></div>
<div class="lbl" style="left:1374px;top:943.6px">LENGTH:</div>
<div class="lb on" style="left:1435px;top:944.85px">1</div>
<div class="lb" style="left:1462.5px;top:944.85px">2</div>
<div class="lb" style="left:1490.5px;top:944.85px">3</div>
<div class="lb" style="left:1518px;top:944.85px">4</div>
<div class="lb" style="left:1546px;top:944.85px">8</div>
<div class="lb" style="left:1574px;top:944.85px">16</div>
</div>
<div style="position:absolute;left:0;top:974px;width:1601px;height:1px;background:#1a84d8"></div>
<div style="position:absolute;left:1600px;top:0;width:1px;height:975px;background:#1a84d8"></div>
<div id="menu"><div id="hl"></div><svg id="chk" width="40" height="40"><path d="M7.3,20.5 L9.4,19.0 L11.9,22.4 L24.3,10.0 L25.0,10.7 L13.0,25.5 L11.7,26.9 L10.9,26.5 Z" fill="#000"/></svg>
<div class="mi" style="top:0.00px">None</div>
<div class="mi" style="top:32.48px">Sin</div>
<div class="mi" style="top:64.96px">Sin*2</div>
<div class="mi" style="top:97.44px">Sin*3</div>
<div class="mi" style="top:129.92px">Sin*4</div>
<div class="mi" style="top:162.40px">Tri</div>
<div class="mi" style="top:194.88px">Tri*2</div>
<div class="mi" style="top:227.36px">Tri*3</div>
<div class="mi" style="top:259.84px">Tri*4</div>
<div class="mi" style="top:292.32px">SawUp</div>
<div class="mi" style="top:324.80px">SawUp*2</div>
<div class="mi" style="top:357.28px">SawUp*3</div>
<div class="mi" style="top:389.76px">SawUp*4</div>
<div class="mi" style="top:422.24px">SawDown</div>
<div class="mi" style="top:454.72px">SawDown*2</div>
<div class="mi" style="top:487.20px">SawDown*3</div>
<div class="mi" style="top:519.68px">SawDown*4</div>
<div class="mi" style="top:552.16px">Square</div>
<div class="mi" style="top:584.64px">Square*2</div>
<div class="mi" style="top:617.12px">Square*3</div>
<div class="mi" style="top:649.60px">Square*4</div>
<div class="mi" style="top:682.08px">Square25</div>
</div>
</body></html>
